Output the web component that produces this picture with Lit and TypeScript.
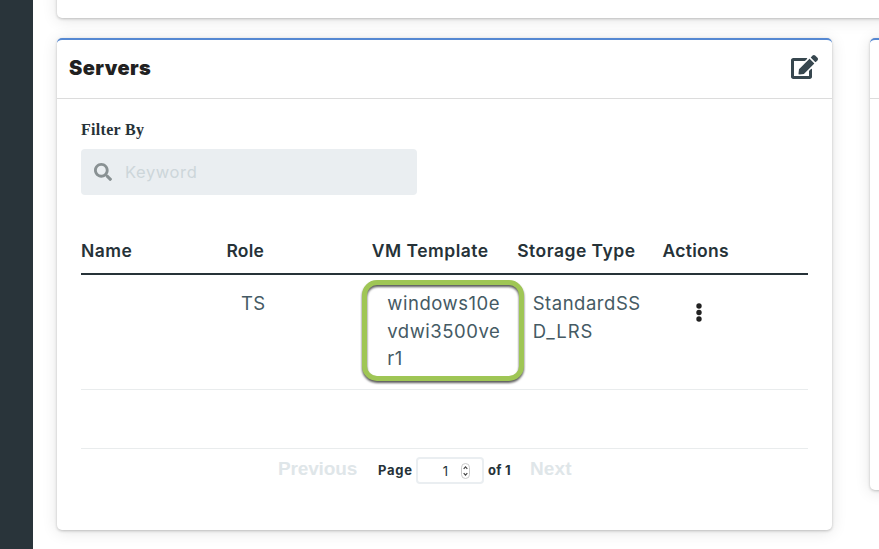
import { LitElement, html, css } from "lit";
import { customElement } from "lit/decorators.js";

@customElement("app-root")
export class AppRoot extends LitElement {
  static styles = css`
    :host {
      display: flex;
      width: 100vw;
      height: 549px;
      overflow: hidden;
      background: #fff;
      color: #263238;
      font-family: Inter, "Liberation Sans", sans-serif;
      box-sizing: border-box;
    }
    *, *::before { box-sizing: border-box; }
    .sidebar { flex: 0 0 33px; background: #29343a; }
    .content { flex: 1; min-width: 0; padding-left: 24px; overflow: hidden; }
    .card {
      background: #fff;
      border-radius: 5px;
      box-shadow: 0 1px 3px rgba(0, 0, 0, 0.22), 0 2px 16px rgba(0, 0, 0, 0.11);
    }
    .content { margin-left: -20px; padding-left: 44px; }
    .sidebar { position: relative; z-index: 1; }
    .upper { width: 900px; height: 38px; margin-top: -20px; }
    .row { display: flex; gap: 38px; margin-top: 20px; align-items: flex-start; }
    .accent { border-top: 2px solid #5588d2; }
    .servers { flex: 0 0 775px; height: 492px; }
    .side { flex: 0 0 400px; height: 452px; }
    .head {
      display: flex;
      align-items: center;
      justify-content: space-between;
      height: 59px;
      padding: 0 14px 0 12px;
      border-bottom: 1px solid #dcdcdc;
    }
    .side .head { padding: 0; }
    .title { margin: -2px 0 0; font-size: 20px; line-height: 28px; font-weight: 900; color: #212121; letter-spacing: 0.43px; }
    .edit { display: block; width: 27px; height: 24px; fill: #37474f; margin-top: -4px; }
    .body { padding: 0 24px; }
    .label { display: block; padding-top: 21px; height: 50px; font: bold 16px/20px "Liberation Serif", serif; letter-spacing: 0.3px; }
    .search {
      display: flex;
      align-items: center;
      width: 336px;
      height: 46px;
      padding: 0 0 1px 13px;
      gap: 13px;
      border-radius: 4px;
      background: #eaeef1;
      color: #cdd6da;
      font-size: 16.5px;
      letter-spacing: 0.6px;
    }
    .search svg { width: 18px; height: 18px; fill: #899193; }
    .columns, .record { display: grid; grid-template-columns: repeat(5, 1fr); }
    .columns {
      margin-top: 31px;
      height: 49px;
      padding-top: 11px;
      border-bottom: 2px solid #263238;
      font-size: 17.5px;
      line-height: 28px;
      font-weight: 600;
      letter-spacing: 0.48px;
      white-space: nowrap;
    }
    .c-role, .c-actions { letter-spacing: 0.25px; }
    .record {
      height: 115px;
      padding-top: 15px;
      border-bottom: 1px solid #e9eced;
      color: #455a64;
      font-size: 18.5px;
      line-height: 27.5px;
      letter-spacing: 0.52px;
    }
    .cell { padding-left: 15.5px; white-space: nowrap; }
    .cell div { width: max-content; }
    .role { margin-left: -1px; }
    .st2 { letter-spacing: 0.95px; }
    .marked { position: relative; }
    .marked::before {
      content: "";
      position: absolute;
      left: -10px;
      top: -10px;
      width: 162px;
      height: 101px;
      border: 5px solid #9fc655;
      border-radius: 15px;
      filter: drop-shadow(0 2px 1px rgba(0, 0, 0, 0.65));
    }
    .dots { display: block; width: 6px; height: 19px; margin: 13px 0 0 17.5px; fill: #212121; }
    .blank { height: 59px; border-bottom: 1px solid #e9eced; }
    .pager { display: flex; align-items: center; height: 41px; padding-left: 197px; white-space: nowrap; }
    .nav { font: bold 19px/24px "Liberation Sans", sans-serif; color: #dfe6e9; width: 100px; margin-top: -1px; letter-spacing: -0.15px; }
    .next { margin-left: 3px; letter-spacing: 0.15px; }
    .page { width: 38px; font-size: 13px; font-weight: 700; letter-spacing: 0.75px; }
    .number {
      display: flex;
      align-items: center;
      justify-content: flex-end;
      width: 68px;
      height: 27px;
      margin-top: 2px;
      padding-right: 12px;
      gap: 13px;
      border: 2px solid #eaeef1;
      border-radius: 4px;
      font-size: 13px;
    }
    .number svg { display: block; width: 9px; height: 16px; }
    .of { width: 43px; padding-left: 4px; font-size: 13px; font-weight: 700; letter-spacing: 0.3px; }
  `;

  render() {
    return html`
      <aside class="sidebar"></aside>
      <main class="content">
        <section class="card upper"></section>
        <div class="row">
          <section class="card accent servers">
            <header class="head">
              <h2 class="title">Servers</h2>
              <svg class="edit" viewBox="0 0 576 512"><path d="M402.6 83.2l90.2 90.2c3.800 3.800 3.800 10 0 13.800L274.400 405.600l-92.800 10.300c-12.400 1.400-22.900-9.100-21.500-21.500l10.300-92.800L388.800 83.200c3.800-3.800 10-3.800 13.800 0zm162-22.900l-48.800-48.800c-15.200-15.200-39.900-15.200-55.200 0l-35.400 35.400c-3.800 3.800-3.800 10 0 13.800l90.200 90.200c3.800 3.800 10 3.800 13.800 0l35.400-35.400c15.200-15.300 15.200-40 0-55.200zM384 346.200V448H64V128h229.800c3.200 0 6.200-1.300 8.500-3.500l40-40c7.600-7.600 2.200-20.500-8.500-20.500H48C21.500 64 0 85.500 0 112v352c0 26.500 21.500 48 48 48h352c26.500 0 48-21.500 48-48V306.200c0-10.700-12.900-16-20.500-8.500l-40 40c-2.200 2.300-3.500 5.300-3.500 8.500z"/></svg>
            </header>
            <div class="body">
              <span class="label">Filter By</span>
              <div class="search">
                <svg viewBox="0 0 512 512"><path d="M505 442.700L405.300 343c-4.500-4.500-10.600-7-17-7H372c27.600-35.300 44-79.700 44-128C416 93.100 322.900 0 208 0S0 93.100 0 208s93.100 208 208 208c48.300 0 92.700-16.400 128-44v16.300c0 6.400 2.500 12.500 7 17l99.700 99.700c9.400 9.400 24.600 9.400 33.900 0l28.300-28.300c9.400-9.400 9.400-24.600.1-34zM208 336c-70.700 0-128-57.200-128-128 0-70.700 57.200-128 128-128 70.700 0 128 57.200 128 128 0 70.700-57.200 128-128 128z"/></svg>
                <span>Keyword</span>
              </div>
              <div class="columns">
                <span>Name</span><span class="c-role">Role</span><span>VM Template</span><span>Storage Type</span><span class="c-actions">Actions</span>
              </div>
              <div class="record">
                <div class="cell"></div>
                <div class="cell"><div class="role">TS</div></div>
                <div class="cell marked"><div>windows10e</div><div>vdwi3500ve</div><div>r1</div></div>
                <div class="cell"><div>StandardSS</div><div class="st2">D_LRS</div></div>
                <div class="cell"><svg class="dots" viewBox="0 0 6 19"><circle cx="3" cy="3" r="2.700"/><circle cx="3" cy="9.500" r="2.700"/><circle cx="3" cy="16" r="2.700"/></svg></div>
              </div>
              <div class="blank"></div>
              <div class="pager">
                <span class="nav">Previous</span>
                <span class="page">Page</span>
                <span class="number"><span>1</span><svg viewBox="0 0 9 16"><rect x=".5" y=".5" width="8" height="15" rx="4" fill="#fff" stroke="#c9c9c9"/><path d="M2.700 5.800L4.500 3.900l1.800 1.900M2.700 10.200l1.800 1.900 1.800-1.900" fill="none" stroke="#444" stroke-width="1.200"/></svg></span>
                <span class="of">of 1</span>
                <span class="nav next">Next</span>
              </div>
            </div>
          </section>
          <section class="card accent side"><div class="head"></div></section>
        </div>
      </main>
    `;
  }
}
